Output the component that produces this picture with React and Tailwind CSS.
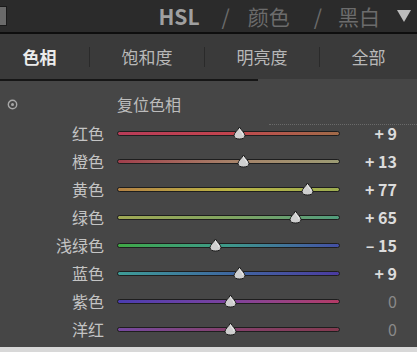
const rows = [
  { name: "红色", value: 9, grad: "from-[#b83c58] via-[#c2444e] to-[#a06a48]" },
  { name: "橙色", value: 13, grad: "from-[#a03e4c] via-[#a68068] to-[#9c9c74]" },
  { name: "黄色", value: 77, grad: "from-[#b48244] via-[#bab444] to-[#9cac50]" },
  { name: "绿色", value: 65, grad: "from-[#a0a854] via-[#80a460] to-[#509c7c]" },
  { name: "浅绿色", value: -15, grad: "from-[#40a844] via-[#3e988a] to-[#434ea4]" },
  { name: "蓝色", value: 9, grad: "from-[#3e9c96] via-[#3e68a0] to-[#4a3aa0]" },
  { name: "紫色", value: 0, grad: "from-[#4a3cb0] via-[#7c429e] to-[#b43a66]" },
  { name: "洋红", value: 0, grad: "from-[#7648a0] via-[#84406c] to-[#843a50]" },
];

const tabs = [
  { label: "色相", w: "w-[90px]", active: true },
  { label: "饱和度", w: "w-[115px]" },
  { label: "明亮度", w: "w-[115px]" },
  { label: "全部", w: "flex-1" },
];

function Thumb({ value }) {
  // 滑块中心 = 轨道左端 + 113 + value
  return (
    <svg
      width="13"
      height="14"
      viewBox="0 0 13 14"
      className="absolute top-[-5px]"
      style={{ left: 113 + value - 6.5 }}
    >
      <path
        d="M6.5 1 C8 4 12 7 12 9.5 C12 12 9.5 13 6.5 13 C3.5 13 1 12 1 9.5 C1 7 5 4 6.5 1 Z"
        fill="#cfcfcf"
        stroke="#1c1c1c"
        strokeWidth="1"
      />
      <path d="M6.5 3 C7.5 5 10 7.5 10 9" stroke="#efefef" strokeWidth="1" fill="none" />
    </svg>
  );
}

function Row({ name, value, grad }) {
  const txt = value === 0 ? "0" : value > 0 ? `+ ${value}` : `– ${-value}`;
  return (
    <div className="flex items-center h-[28px]">
      <div className="w-[104px] text-right text-[16px] text-[#c4c4c4] leading-none">{name}</div>
      <div className="relative ml-[13px] w-[223px] h-[5px]">
        <div className={`h-[5px] rounded-full border border-[#1e1e1e] bg-linear-to-r ${grad}`} />
        <Thumb value={value} />
      </div>
      <div
        className={`w-[57px] text-right text-[16px] font-bold leading-none ${
          value === 0 ? "text-[#8a8a8a] font-normal" : "text-[#dcdcdc]"
        }`}
      >
        {txt}
      </div>
    </div>
  );
}

export default function App() {
  return (
    <div
      className="w-[417px] h-[352px] flex flex-col bg-[#464646] overflow-hidden"
      style={{ fontFamily: '"Noto Sans CJK SC", "Liberation Sans", sans-serif' }}
    >
      {/* 顶部标题栏 */}
      <div className="h-[34px] bg-[#2b2b2b] flex items-center border-b-2 border-[#0e0e0e]">
        <div className="w-[7px] h-[20px] bg-[#6a6a6a] border border-[#1a1a1a] border-l-0" />
        <div className="ml-auto flex items-center text-[21px] leading-none text-[#6c6c6c] pr-[5px]">
          <span className="text-[#a0a0a0] font-semibold">HSL</span>
          <span className="ml-[22px]">/</span>
          <span className="ml-[18px]">颜色</span>
          <span className="ml-[24px]">/</span>
          <span className="ml-[16px]">黑白</span>
          <svg width="16" height="14" viewBox="0 0 16 14" className="ml-[16px]">
            <path d="M1 1 L15 1 L8 13 Z" fill="#bdbdbd" />
          </svg>
        </div>
      </div>

      {/* 标签 */}
      <div className="h-[45px] bg-[#3a3a3a] flex items-center">
        {tabs.map((t, i) => (
          <div key={t.label} className={`${t.w} h-full flex items-center`}>
            <div
              className={`flex-1 text-center text-[17px] leading-none ${
                t.active ? "text-[#ececec] font-bold pr-[10px]" : "text-[#b8b8b8]"
              }`}
            >
              {t.label}
            </div>
            {i < 3 && <div className="w-px h-[20px] bg-[#2a2a2a]" />}
          </div>
        ))}
      </div>
      <div className="h-[2px] w-[258px] bg-[#161616]" />

      {/* 主体 */}
      <div className="flex-1 flex flex-col pt-[12px]">
        <div className="flex items-center h-[22px]">
          <div className="w-[24px] flex justify-center">
            <svg width="11" height="11" viewBox="0 0 11 11">
              <circle cx="5.5" cy="5.5" r="4.2" stroke="#a8a8a8" strokeWidth="1.4" fill="none" />
              <circle cx="5.5" cy="5.5" r="1.5" fill="#a8a8a8" />
            </svg>
          </div>
          <div className="ml-[93px] text-[16px] text-[#bcbcbc] leading-none">复位色相</div>
          <div className="ml-auto self-end mb-[-10px] w-[148px] border-t border-dotted border-[#6a6a6a]" />
        </div>
        <div className="mt-[4px]">
          {rows.map((r) => (
            <Row key={r.name} {...r} />
          ))}
        </div>
        <div className="mt-auto h-[5px] bg-[#d8d8d8]" />
      </div>
    </div>
  );
}
